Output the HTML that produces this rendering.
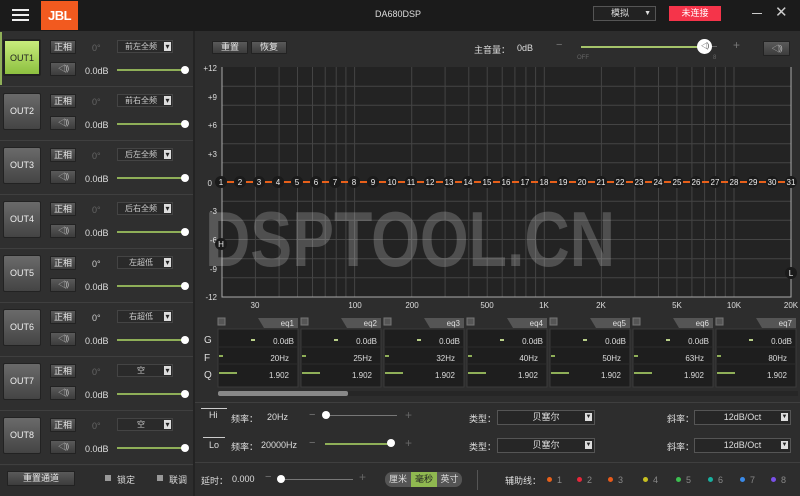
<!DOCTYPE html>
<html><head><meta charset="utf-8"><style>
*{margin:0;padding:0;box-sizing:border-box}
body{width:800px;height:496px;overflow:hidden;background:#2d2d2d;font-family:"Liberation Sans","Noto Sans CJK SC",sans-serif;color:#ddd;font-size:9px;position:relative}
.a{position:absolute}
.top{left:0;top:0;width:800px;height:31px;background:#1b1b1b}
.btn{position:absolute;background:linear-gradient(#5a5a5a,#3c3c3c);border:1px solid #222;color:#e8e8e8;font-size:9px;text-align:center;border-radius:1px}
.spk{color:#bbb;font-size:8px;letter-spacing:-1px}
.out{position:absolute;left:3px;width:38px;height:37px;background:linear-gradient(#6a6a6a,#444);border:1px solid #222;color:#eee;font-size:9px;text-align:center;line-height:35px;border-radius:2px}
.dd{position:absolute;background:#2a2a2a;border:1px solid #444;color:#ccc;font-size:8px;text-align:center;line-height:11px;padding-right:8px}
.dd:after{content:"▾";position:absolute;right:1px;top:0;background:#ddd;color:#222;width:7px;height:9px;line-height:9px;font-size:8px;margin-top:1px}
.sl{position:absolute;height:2px;background:#8faf58}
.knob{position:absolute;width:8px;height:8px;border-radius:50%;background:#fff}
.sep{position:absolute;left:0;width:193px;height:1px;background:#3f3f3f}
</style></head><body>
<div class="a top"></div>
<div class="a" style="left:12px;top:9px;width:17px;height:2px;background:#eee"></div>
<div class="a" style="left:12px;top:14px;width:17px;height:2px;background:#eee"></div>
<div class="a" style="left:12px;top:19px;width:17px;height:2px;background:#eee"></div>
<div class="a" style="left:41px;top:1px;width:37px;height:29px;background:#f25a1f;color:#fff;font-weight:bold;font-size:13px;text-align:center;line-height:29px;letter-spacing:-0.5px">JBL</div>
<div class="a" style="left:375px;top:9px;font-size:9px;color:#ddd">DA680DSP</div>
<div class="a" style="left:593px;top:6px;width:63px;height:15px;border:1px solid #555;background:#222;color:#ddd;font-size:9px;line-height:13px;padding-left:17px">模拟 <span style="position:absolute;right:4px;font-size:7px">▼</span></div>
<div class="a" style="left:669px;top:6px;width:52px;height:15px;background:#f5344a;color:#fff;text-align:center;line-height:15px;font-size:9px">未连接</div>
<div class="a" style="left:752px;top:13px;width:10px;height:1px;background:#ccc"></div>
<div class="a" style="left:775px;top:3px;font-size:15px;color:#ccc">✕</div>

<div class="a" style="left:0;top:31px;width:193px;height:435px;background:#2f2f2f"></div>
<div class="a" style="left:193px;top:31px;width:2px;height:465px;background:#232323"></div>
<div class="a" style="left:0;top:32px;width:2px;height:53px;background:#8faf58"></div>

<div class="out" style="top:39px;background:linear-gradient(#c8ec7c,#8dc040);color:#222;border:2px solid #222">OUT1</div>
<div class="out" style="top:93px">OUT2</div>
<div class="out" style="top:147px">OUT3</div>
<div class="out" style="top:201px">OUT4</div>
<div class="out" style="top:255px">OUT5</div>
<div class="out" style="top:309px">OUT6</div>
<div class="out" style="top:363px">OUT7</div>
<div class="out" style="top:417px">OUT8</div>

<div class="sep" style="top:86px"></div><div class="sep" style="top:140px"></div><div class="sep" style="top:194px"></div><div class="sep" style="top:248px"></div><div class="sep" style="top:302px"></div><div class="sep" style="top:356px"></div><div class="sep" style="top:410px"></div><div class="sep" style="top:464px"></div>

<div class="btn" style="left:50px;top:40px;width:26px;height:14px;line-height:12px">正相</div><div class="btn spk" style="left:50px;top:62px;width:26px;height:14px;line-height:12px">◁))</div>
<div class="btn" style="left:50px;top:94px;width:26px;height:14px;line-height:12px">正相</div><div class="btn spk" style="left:50px;top:116px;width:26px;height:14px;line-height:12px">◁))</div>
<div class="btn" style="left:50px;top:148px;width:26px;height:14px;line-height:12px">正相</div><div class="btn spk" style="left:50px;top:170px;width:26px;height:14px;line-height:12px">◁))</div>
<div class="btn" style="left:50px;top:202px;width:26px;height:14px;line-height:12px">正相</div><div class="btn spk" style="left:50px;top:224px;width:26px;height:14px;line-height:12px">◁))</div>
<div class="btn" style="left:50px;top:256px;width:26px;height:14px;line-height:12px">正相</div><div class="btn spk" style="left:50px;top:278px;width:26px;height:14px;line-height:12px">◁))</div>
<div class="btn" style="left:50px;top:310px;width:26px;height:14px;line-height:12px">正相</div><div class="btn spk" style="left:50px;top:332px;width:26px;height:14px;line-height:12px">◁))</div>
<div class="btn" style="left:50px;top:364px;width:26px;height:14px;line-height:12px">正相</div><div class="btn spk" style="left:50px;top:386px;width:26px;height:14px;line-height:12px">◁))</div>
<div class="btn" style="left:50px;top:418px;width:26px;height:14px;line-height:12px">正相</div><div class="btn spk" style="left:50px;top:440px;width:26px;height:14px;line-height:12px">◁))</div>

<div class="a" style="left:92px;top:43px;color:#666">0°</div><div class="a" style="left:92px;top:97px;color:#666">0°</div><div class="a" style="left:92px;top:151px;color:#666">0°</div><div class="a" style="left:92px;top:205px;color:#666">0°</div><div class="a" style="left:92px;top:259px;color:#ccc">0°</div><div class="a" style="left:92px;top:313px;color:#ccc">0°</div><div class="a" style="left:92px;top:367px;color:#666">0°</div><div class="a" style="left:92px;top:421px;color:#666">0°</div>

<div class="dd" style="left:117px;top:40px;width:56px;height:13px">前左全频</div>
<div class="dd" style="left:117px;top:94px;width:56px;height:13px">前右全频</div>
<div class="dd" style="left:117px;top:148px;width:56px;height:13px">后左全频</div>
<div class="dd" style="left:117px;top:202px;width:56px;height:13px">后右全频</div>
<div class="dd" style="left:117px;top:256px;width:56px;height:13px">左超低</div>
<div class="dd" style="left:117px;top:310px;width:56px;height:13px">右超低</div>
<div class="dd" style="left:117px;top:364px;width:56px;height:13px">空</div>
<div class="dd" style="left:117px;top:418px;width:56px;height:13px">空</div>

<div class="a" style="left:85px;top:66px">0.0dB</div><div class="a" style="left:85px;top:120px">0.0dB</div><div class="a" style="left:85px;top:174px">0.0dB</div><div class="a" style="left:85px;top:228px">0.0dB</div><div class="a" style="left:85px;top:282px">0.0dB</div><div class="a" style="left:85px;top:336px">0.0dB</div><div class="a" style="left:85px;top:390px">0.0dB</div><div class="a" style="left:85px;top:444px">0.0dB</div>

<div class="sl" style="left:117px;top:69px;width:68px"></div><div class="knob" style="left:181px;top:66px"></div>
<div class="sl" style="left:117px;top:123px;width:68px"></div><div class="knob" style="left:181px;top:120px"></div>
<div class="sl" style="left:117px;top:177px;width:68px"></div><div class="knob" style="left:181px;top:174px"></div>
<div class="sl" style="left:117px;top:231px;width:68px"></div><div class="knob" style="left:181px;top:228px"></div>
<div class="sl" style="left:117px;top:285px;width:68px"></div><div class="knob" style="left:181px;top:282px"></div>
<div class="sl" style="left:117px;top:339px;width:68px"></div><div class="knob" style="left:181px;top:336px"></div>
<div class="sl" style="left:117px;top:393px;width:68px"></div><div class="knob" style="left:181px;top:390px"></div>
<div class="sl" style="left:117px;top:447px;width:68px"></div><div class="knob" style="left:181px;top:444px"></div>

<div class="btn" style="left:7px;top:471px;width:68px;height:15px;line-height:13px">重置通道</div>
<div class="a" style="left:105px;top:475px;width:6px;height:6px;background:#999"></div><div class="a" style="left:117px;top:473px">锁定</div>
<div class="a" style="left:157px;top:475px;width:6px;height:6px;background:#999"></div><div class="a" style="left:169px;top:473px">联调</div>

<div class="btn" style="left:212px;top:41px;width:36px;height:13px;line-height:11px">重置</div>
<div class="btn" style="left:251px;top:41px;width:36px;height:13px;line-height:11px">恢复</div>
<div class="a" style="left:474px;top:43px">主音量：</div>
<div class="a" style="left:517px;top:43px">0dB</div>
<div class="a" style="left:556px;top:39px;color:#777;font-size:11px">−</div>
<div class="a" style="left:581px;top:46px;width:118px;height:2px;background:#a5c36a"></div>
<div class="a" style="left:699px;top:46px;width:18px;height:1px;background:#666"></div>
<div class="a" style="left:697px;top:39px;width:15px;height:15px;border-radius:50%;background:#fff;color:#333;font-size:7px;text-align:center;line-height:15px;letter-spacing:-1px">◁)</div>
<div class="a" style="left:577px;top:55px;color:#666;font-size:6px">OFF</div>
<div class="a" style="left:713px;top:55px;color:#666;font-size:6px">8</div>
<div class="a" style="left:733px;top:38px;color:#777;font-size:12px">+</div>
<div class="btn spk" style="left:763px;top:41px;width:27px;height:15px;line-height:13px">◁))</div>

<svg class="a" style="left:195px;top:58px" width="605" height="255" font-family="Liberation Sans" font-size="8">
<rect x="27" y="9" width="569" height="230" fill="#232323"/>
<g stroke="#444" stroke-width="1">
<path d="M27 28.2H596M27 47.3H596M27 66.5H596M27 85.7H596M27 104.8H596M27 143.2H596M27 162.3H596M27 181.5H596M27 200.7H596M27 219.8H596"/>
<path d="M60.4 9V239M84.1 9V239M102.5 9V239M117.5 9V239M130.2 9V239M141.2 9V239M150.9 9V239M159.6 9V239M216.7 9V239M250.1 9V239M273.8 9V239M292.2 9V239M307.2 9V239M319.9 9V239M330.9 9V239M340.6 9V239M349.3 9V239M406.4 9V239M439.8 9V239M463.5 9V239M481.9 9V239M496.9 9V239M509.6 9V239M520.6 9V239M530.3 9V239M539 9V239"/>
</g>
<path d="M27 124H596" stroke="#555"/>
<path d="M27 9V239H596V9" stroke="#aaa" fill="none"/>
<g fill="#ddd" text-anchor="end"><text x="22" y="13">+12</text><text x="22" y="42">+9</text><text x="22" y="70">+6</text><text x="22" y="99">+3</text><text x="17" y="128">0</text><text x="22" y="156">-3</text><text x="22" y="185">-6</text><text x="22" y="214">-9</text><text x="22" y="242">-12</text></g>
<g fill="#ddd" text-anchor="middle"><text x="60" y="250">30</text><text x="160" y="250">100</text><text x="217" y="250">200</text><text x="292" y="250">500</text><text x="349" y="250">1K</text><text x="406" y="250">2K</text><text x="482" y="250">5K</text><text x="539" y="250">10K</text><text x="596" y="250">20K</text></g>
<text x="10" y="208" font-size="78" font-weight="bold" fill="#fff" fill-opacity="0.2" textLength="410" lengthAdjust="spacingAndGlyphs">DSPTOOL.CN</text>
<path d="M26 124H596" stroke="#e8601a" stroke-width="2"/>
<g fill="#1a1a1a"><circle cx="26" cy="124" r="6"/><circle cx="45" cy="124" r="6"/><circle cx="64" cy="124" r="6"/><circle cx="83" cy="124" r="6"/><circle cx="102" cy="124" r="6"/><circle cx="121" cy="124" r="6"/><circle cx="140" cy="124" r="6"/><circle cx="159" cy="124" r="6"/><circle cx="178" cy="124" r="6"/><circle cx="197" cy="124" r="6"/><circle cx="216" cy="124" r="6"/><circle cx="235" cy="124" r="6"/><circle cx="254" cy="124" r="6"/><circle cx="273" cy="124" r="6"/><circle cx="292" cy="124" r="6"/><circle cx="311" cy="124" r="6"/><circle cx="330" cy="124" r="6"/><circle cx="349" cy="124" r="6"/><circle cx="368" cy="124" r="6"/><circle cx="387" cy="124" r="6"/><circle cx="406" cy="124" r="6"/><circle cx="425" cy="124" r="6"/><circle cx="444" cy="124" r="6"/><circle cx="463" cy="124" r="6"/><circle cx="482" cy="124" r="6"/><circle cx="501" cy="124" r="6"/><circle cx="520" cy="124" r="6"/><circle cx="539" cy="124" r="6"/><circle cx="558" cy="124" r="6"/><circle cx="577" cy="124" r="6"/><circle cx="596" cy="124" r="6"/><circle cx="26" cy="186" r="6"/><circle cx="596" cy="215" r="6"/></g>
<g fill="#eee" text-anchor="middle" font-size="8"><text x="26" y="127">1</text><text x="45" y="127">2</text><text x="64" y="127">3</text><text x="83" y="127">4</text><text x="102" y="127">5</text><text x="121" y="127">6</text><text x="140" y="127">7</text><text x="159" y="127">8</text><text x="178" y="127">9</text><text x="197" y="127">10</text><text x="216" y="127">11</text><text x="235" y="127">12</text><text x="254" y="127">13</text><text x="273" y="127">14</text><text x="292" y="127">15</text><text x="311" y="127">16</text><text x="330" y="127">17</text><text x="349" y="127">18</text><text x="368" y="127">19</text><text x="387" y="127">20</text><text x="406" y="127">21</text><text x="425" y="127">22</text><text x="444" y="127">23</text><text x="463" y="127">24</text><text x="482" y="127">25</text><text x="501" y="127">26</text><text x="520" y="127">27</text><text x="539" y="127">28</text><text x="558" y="127">29</text><text x="577" y="127">30</text><text x="596" y="127">31</text><text x="26" y="189">H</text><text x="596" y="218">L</text></g>
</svg>

<div class="a" style="left:204px;top:335px;font-size:10px">G</div>
<div class="a" style="left:204px;top:353px;font-size:10px">F</div>
<div class="a" style="left:204px;top:370px;font-size:10px">Q</div>
<svg class="a" style="left:195px;top:316px" width="605" height="85" font-family="Liberation Sans" font-size="8" fill="#ddd">
<defs><g id="e"><rect x="0" y="2" width="7" height="7" fill="#555" stroke="#777"/><path d="M40 2H80V12H46Z" fill="#555"/><rect x="0" y="13" width="80" height="58" fill="#1e1e1e" stroke="#3a3a3a"/><path d="M1 31H79M1 48H79" stroke="#2c2c2c"/><path d="M33 24H37" stroke="#b8cf88" stroke-width="2"/><path d="M1 40H5M1 57H19" stroke="#8faf58" stroke-width="2"/></g></defs>
<use href="#e" x="23"/><use href="#e" x="106"/><use href="#e" x="189"/><use href="#e" x="272"/><use href="#e" x="355"/><use href="#e" x="438"/><use href="#e" x="521"/>
<g text-anchor="end"><text x="99" y="10">eq1</text><text x="182" y="10">eq2</text><text x="265" y="10">eq3</text><text x="348" y="10">eq4</text><text x="431" y="10">eq5</text><text x="514" y="10">eq6</text><text x="597" y="10">eq7</text>
<text x="99" y="28">0.0dB</text><text x="182" y="28">0.0dB</text><text x="265" y="28">0.0dB</text><text x="348" y="28">0.0dB</text><text x="431" y="28">0.0dB</text><text x="514" y="28">0.0dB</text><text x="597" y="28">0.0dB</text>
<text x="94" y="45">20Hz</text><text x="177" y="45">25Hz</text><text x="260" y="45">32Hz</text><text x="343" y="45">40Hz</text><text x="426" y="45">50Hz</text><text x="509" y="45">63Hz</text><text x="592" y="45">80Hz</text>
<text x="94" y="62">1.902</text><text x="177" y="62">1.902</text><text x="260" y="62">1.902</text><text x="343" y="62">1.902</text><text x="426" y="62">1.902</text><text x="509" y="62">1.902</text><text x="592" y="62">1.902</text></g>
<rect x="23" y="75" width="580" height="5" fill="#262626"/><rect x="23" y="75" width="130" height="5" rx="2" fill="#888"/>
</svg>

<div class="a" style="left:195px;top:402px;width:605px;height:1px;background:#3f3f3f"></div>
<div class="a" style="left:195px;top:462px;width:605px;height:1px;background:#3f3f3f"></div>

<div class="a" style="left:201px;top:408px;width:26px;height:12px;border-top:1px solid #ccc;font-size:9px;padding-left:8px;padding-top:1px">Hi</div>
<div class="a" style="left:231px;top:412px">频率：</div><div class="a" style="left:267px;top:412px">20Hz</div>
<div class="a" style="left:309px;top:409px;color:#777;font-size:11px">−</div>
<div class="a" style="left:325px;top:415px;width:72px;height:1px;background:#777"></div>
<div class="knob" style="left:322px;top:411px"></div>
<div class="a" style="left:405px;top:408px;color:#666;font-size:12px">+</div>
<div class="a" style="left:469px;top:412px">类型：</div>
<div class="a" style="left:497px;top:410px;width:98px;height:15px;border:1px solid #555;background:#262626;text-align:center;line-height:13px">贝塞尔<span style="position:absolute;right:2px;top:2px;width:7px;height:8px;background:#ddd;color:#222;font-size:6px;line-height:8px">▼</span></div>
<div class="a" style="left:667px;top:412px">斜率：</div>
<div class="a" style="left:694px;top:410px;width:97px;height:15px;border:1px solid #555;background:#262626;text-align:center;line-height:13px">12dB/Oct<span style="position:absolute;right:2px;top:2px;width:7px;height:8px;background:#ddd;color:#222;font-size:6px;line-height:8px">▼</span></div>

<div class="a" style="left:203px;top:437px;width:22px;height:1px;background:#ccc"></div>
<div class="a" style="left:209px;top:440px;font-size:9px">Lo</div>
<div class="a" style="left:231px;top:440px">频率：</div><div class="a" style="left:261px;top:440px">20000Hz</div>
<div class="a" style="left:309px;top:437px;color:#777;font-size:11px">−</div>
<div class="a" style="left:325px;top:443px;width:66px;height:2px;background:#8faf58"></div>
<div class="knob" style="left:387px;top:439px"></div>
<div class="a" style="left:405px;top:436px;color:#666;font-size:12px">+</div>
<div class="a" style="left:469px;top:440px">类型：</div>
<div class="a" style="left:497px;top:438px;width:98px;height:15px;border:1px solid #555;background:#262626;text-align:center;line-height:13px">贝塞尔<span style="position:absolute;right:2px;top:2px;width:7px;height:8px;background:#ddd;color:#222;font-size:6px;line-height:8px">▼</span></div>
<div class="a" style="left:667px;top:440px">斜率：</div>
<div class="a" style="left:694px;top:438px;width:97px;height:15px;border:1px solid #555;background:#262626;text-align:center;line-height:13px">12dB/Oct<span style="position:absolute;right:2px;top:2px;width:7px;height:8px;background:#ddd;color:#222;font-size:6px;line-height:8px">▼</span></div>

<div class="a" style="left:201px;top:474px">延时：</div><div class="a" style="left:232px;top:474px">0.000</div>
<div class="a" style="left:265px;top:471px;color:#777;font-size:11px">−</div>
<div class="a" style="left:280px;top:479px;width:73px;height:1px;background:#777"></div>
<div class="knob" style="left:277px;top:475px"></div>
<div class="a" style="left:359px;top:470px;color:#666;font-size:12px">+</div>
<div class="a" style="left:385px;top:472px;width:77px;height:15px;border-radius:7px;background:#555;overflow:hidden;font-size:9px;line-height:15px">
<span style="position:absolute;left:0;width:26px;text-align:center">厘米</span><span style="position:absolute;left:26px;width:26px;text-align:center;background:#8fb850;color:#222">毫秒</span><span style="position:absolute;left:52px;width:25px;text-align:center">英寸</span></div>
<div class="a" style="left:477px;top:470px;width:1px;height:20px;background:#555"></div>
<div class="a" style="left:505px;top:474px">辅助线：</div>
<div class="a" style="left:547px;top:477px;width:5px;height:5px;border-radius:50%;background:#e8601a"></div><div class="a" style="left:557px;top:475px;color:#888">1</div>
<div class="a" style="left:577px;top:477px;width:5px;height:5px;border-radius:50%;background:#e8263a"></div><div class="a" style="left:587px;top:475px;color:#888">2</div>
<div class="a" style="left:608px;top:477px;width:5px;height:5px;border-radius:50%;background:#e85a1a"></div><div class="a" style="left:618px;top:475px;color:#888">3</div>
<div class="a" style="left:643px;top:477px;width:5px;height:5px;border-radius:50%;background:#c8c020"></div><div class="a" style="left:653px;top:475px;color:#888">4</div>
<div class="a" style="left:676px;top:477px;width:5px;height:5px;border-radius:50%;background:#3cc050"></div><div class="a" style="left:686px;top:475px;color:#888">5</div>
<div class="a" style="left:708px;top:477px;width:5px;height:5px;border-radius:50%;background:#18b0a0"></div><div class="a" style="left:718px;top:475px;color:#888">6</div>
<div class="a" style="left:740px;top:477px;width:5px;height:5px;border-radius:50%;background:#3a8ae8"></div><div class="a" style="left:750px;top:475px;color:#888">7</div>
<div class="a" style="left:771px;top:477px;width:5px;height:5px;border-radius:50%;background:#7a50e8"></div><div class="a" style="left:781px;top:475px;color:#888">8</div>
</body></html>
